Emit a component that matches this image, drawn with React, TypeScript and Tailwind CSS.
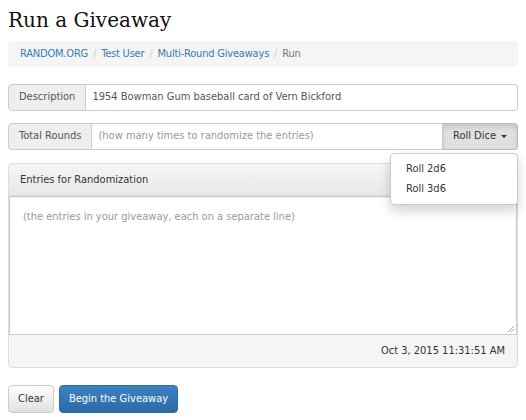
import React from "react";

export default function App() {
  return (
    <div className="w-[526px] h-[420px] overflow-hidden bg-white px-2 font-['DejaVu_Sans_Condensed'] text-[11px] text-[#333]">
      <h1 className="pt-[7px] font-['DejaVu_Serif'] text-[20px] leading-[27px] text-[#111]">Run a Giveaway</h1>

      <div className="mt-[7px] flex h-[26px] items-center gap-[5px] rounded bg-[#f5f5f5] px-3 tracking-[-0.2px]">
        <span className="text-[#337ab7]">RANDOM.ORG</span>
        <span className="text-[#ccc]">/</span>
        <span className="text-[#337ab7]">Test User</span>
        <span className="text-[#ccc]">/</span>
        <span className="text-[#337ab7]">Multi-Round Giveaways</span>
        <span className="text-[#ccc]">/</span>
        <span className="text-[#777]">Run</span>
      </div>

      <div className="mt-[17px] flex h-[27px]">
        <div className="flex items-center rounded-l border border-[#ccc] bg-[#eee] px-[10px] text-[#555]">
          Description
        </div>
        <div className="flex flex-1 items-center rounded-r border border-l-0 border-[#ccc] px-[6px] text-[#555]">
          1954 Bowman Gum baseball card of Vern Bickford
        </div>
      </div>

      <div className="relative mt-[12px] flex h-[27px]">
        <div className="flex items-center rounded-l border border-[#ccc] bg-[#eee] px-[10px] text-[#555]">
          Total Rounds
        </div>
        <div className="flex flex-1 items-center border border-l-0 border-[#ccc] px-[6px] text-[#999]">
          (how many times to randomize the entries)
        </div>
        <div className="flex w-[75px] items-center justify-center gap-[5px] rounded-r border border-l-0 border-[#bbb] bg-[#e0e0e0] text-[#333] shadow-[inset_0_3px_5px_rgba(0,0,0,0.125)]">
          Roll Dice
          <span className="inline-block h-0 w-0 border-x-[3px] border-t-[3px] border-x-transparent border-t-[#333]" />
        </div>
        <div className="absolute right-0 top-[30px] z-10 w-[128px] rounded border border-[#ccc] bg-white py-[5px] shadow-[0_6px_12px_rgba(0,0,0,0.175)]">
          <div className="flex h-[20px] items-center px-[15px] text-[#333]">Roll 2d6</div>
          <div className="flex h-[20px] items-center px-[15px] text-[#333]">Roll 3d6</div>
        </div>
      </div>

      <div className="mt-[13px] flex flex-col rounded border border-[#ddd]">
        <div className="flex h-[32px] items-center rounded-t border-b border-[#ddd] bg-gradient-to-b from-[#f5f5f5] to-[#e8e8e8] px-[11px] pt-[2px] text-[#333]">
          Entries for Randomization
        </div>
        <div className="relative h-[139px] border border-[#ccc] bg-white px-[13px] pt-[12px] text-[#999] shadow-[inset_0_1px_1px_rgba(0,0,0,0.075)]">
          (the entries in your giveaway, each on a separate line)
          <svg className="absolute bottom-[1px] right-[1px]" width="8" height="8" viewBox="0 0 8 8">
            <path d="M7 1 L1 7 M7 4 L4 7" stroke="#aaa" strokeWidth="1" />
          </svg>
        </div>
        <div className="flex h-[32px] items-center justify-end rounded-b bg-[#f5f5f5] px-[12px] text-[#333]">
          Oct 3, 2015 11:31:51 AM
        </div>
      </div>

      <div className="mt-[17px] flex gap-[5px]">
        <div className="flex h-[28px] items-center rounded border border-[#ccc] bg-gradient-to-b from-white to-[#e0e0e0] px-[9px] text-[#333]">
          Clear
        </div>
        <div className="flex h-[28px] items-center rounded border border-[#2e6da4] bg-gradient-to-b from-[#3b82c4] to-[#2c6aa5] px-[9px] text-white">
          Begin the Giveaway
        </div>
      </div>
    </div>
  );
}
